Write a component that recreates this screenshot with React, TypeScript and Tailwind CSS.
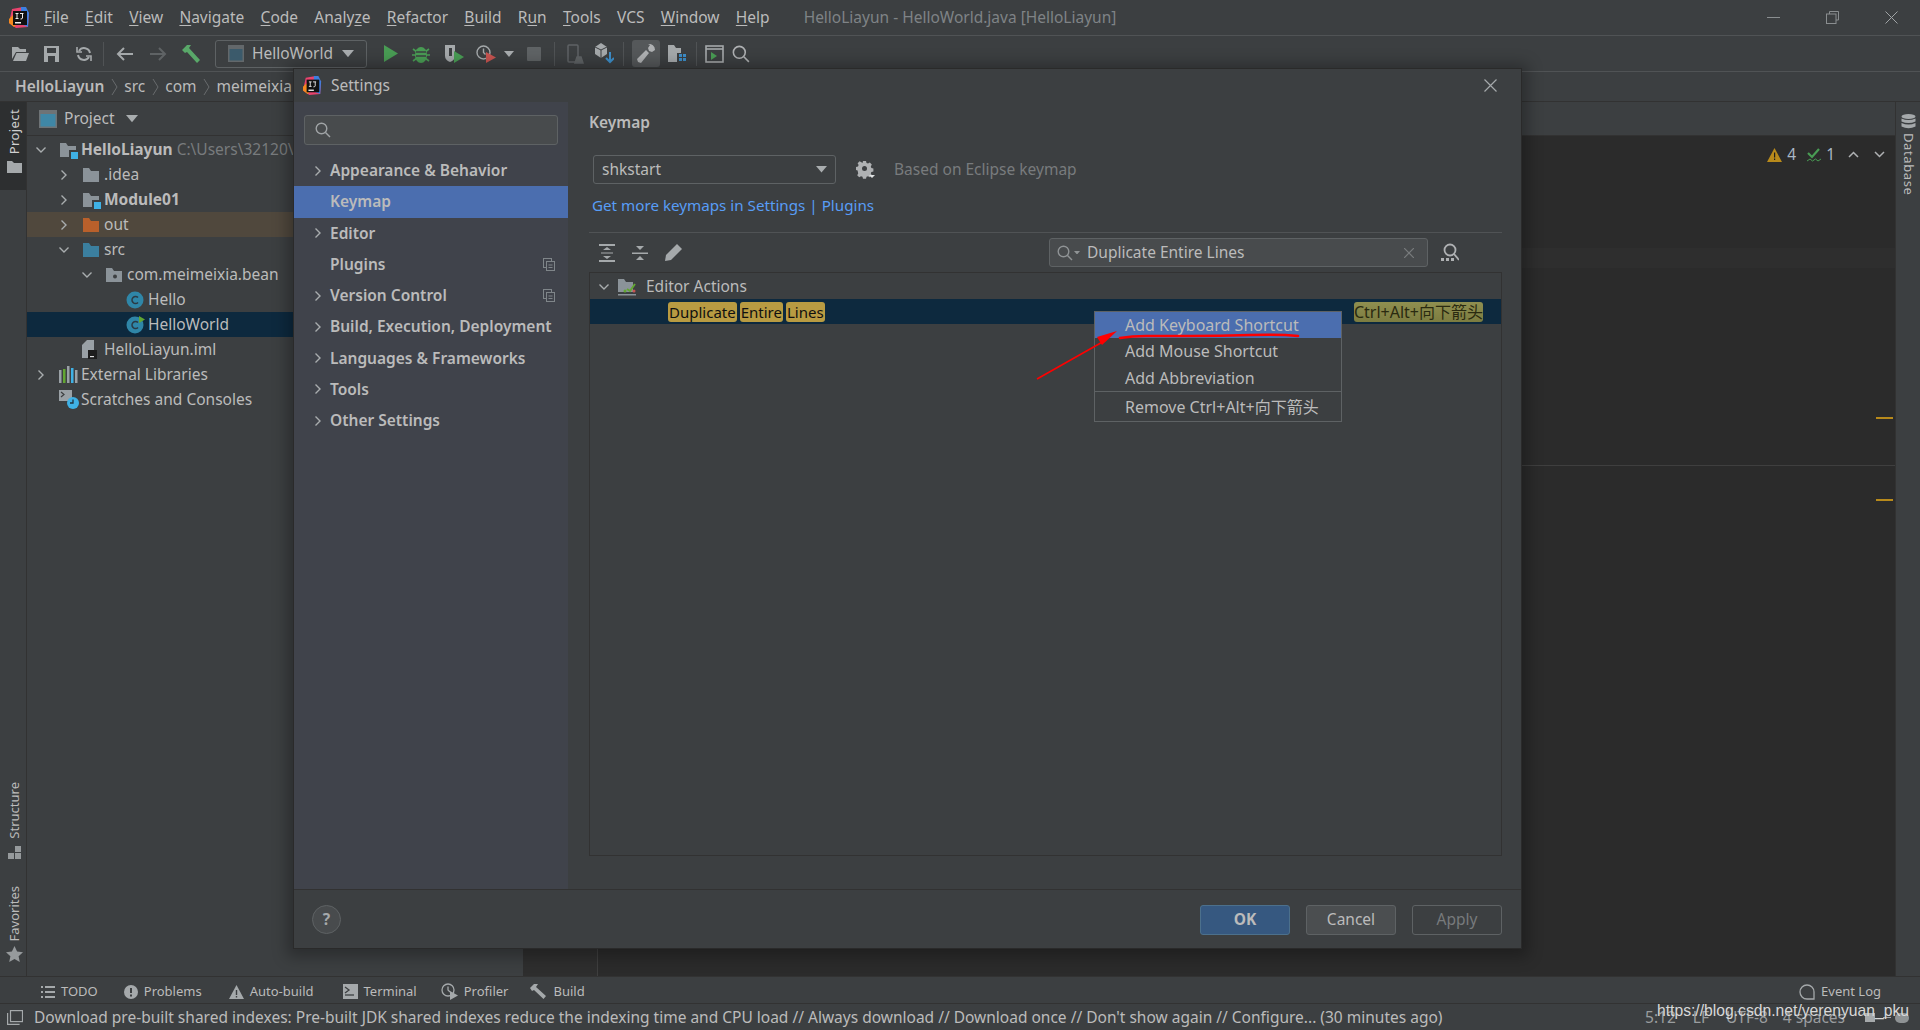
import type { ReactNode } from "react";

const ChevronRight = ({ className = "" }: { className?: string }) => (
  <svg width="8" height="12" viewBox="0 0 8 12" fill="none" stroke="#a9adaf" strokeWidth="1.4" className={className}>
    <path d="M1.5 1.5 6 6l-4.500 4.500" />
  </svg>
);

const ChevronDown = () => (
  <svg width="12" height="8" viewBox="0 0 12 8" fill="none" stroke="#a9adaf" strokeWidth="1.4">
    <path d="M1.500 1.500 6 6l4.500-4.500" />
  </svg>
);

const Caret = ({ size = 12, color = "#a9adaf" }: { size?: number; color?: string }) => (
  <svg width={size} height={size * 0.6} viewBox="0 0 10 6" fill={color}>
    <path d="M0 0h10L5 6z" />
  </svg>
);

const IdeaLogo = ({ size = 21 }: { size?: number }) => (
  <svg width={size} height={size} viewBox="0 0 21 21">
    <path d="M3 2 14 0l6 6-1 14-12 1-7-5z" fill="#e8436e" />
    <path d="M12 0h5l3 6-1 14-7-3z" fill="#3d7fe0" />
    <path d="M0 12l4-4 4 9-3 3-5-4z" fill="#f58a1f" />
    <rect x="4" y="4" width="14" height="14" fill="#111" />
    <rect x="6" y="15" width="6" height="1.500" fill="#eee" />
    <path d="M6.500 6.500h3M8 6.500v5M6.500 11.500h3M11 6.500h3.500M13.500 6.500v4.500q0 1-2 1" stroke="#eee" strokeWidth="1" fill="none" />
  </svg>
);

const Folder = ({ color = "#8b9399", badge, dot }: { color?: string; badge?: boolean; dot?: boolean }) => (
  <svg width="19" height="18" viewBox="0 0 19 18">
    <path d="M1 2h6l2 3h8v11H1z" fill={color} />
    {dot && <circle cx="10" cy="10.500" r="2" fill="#3c3f41" />}
    {badge && <rect x="10" y="9" width="9" height="9" fill="#3c3f41" />}
    {badge && <rect x="12" y="11" width="7" height="7" fill="#3fb1e5" />}
  </svg>
);

const ClassIcon = ({ run }: { run?: boolean }) => (
  <svg width="19" height="19" viewBox="0 0 19 19">
    <circle cx="9" cy="10" r="8.500" fill="#2f86a8" />
    <path d="M12 7.500a3.500 3.500 0 1 0 0 5" fill="none" stroke="#2b3a44" strokeWidth="1.600" />
    {run && <path d="M13 1l6 3.500L13 8z" fill="#62a632" />}
  </svg>
);

const ImlIcon = () => (
  <svg width="15" height="19" viewBox="0 0 15 19">
    <path d="M0 5 5 0h7v18H0z" fill="#9aa1a6" />
    <rect x="6" y="10" width="9" height="9" fill="#1d1d1d" />
    <rect x="8" y="16" width="4" height="1.200" fill="#ddd" />
  </svg>
);

const LibIcon = () => (
  <svg width="19" height="17" viewBox="0 0 19 17">
    <rect x="0" y="4" width="2.500" height="13" fill="#9aa1a6" />
    <rect x="4" y="3" width="2.500" height="14" fill="#62a632" />
    <rect x="8" y="0" width="2.500" height="17" fill="#9aa1a6" />
    <rect x="12" y="2" width="2.500" height="15" fill="#3fb1e5" />
    <rect x="16" y="4" width="2.500" height="13" fill="#9aa1a6" />
  </svg>
);

const ScratchIcon = () => (
  <svg width="20" height="19" viewBox="0 0 20 19">
    <rect x="0" y="0" width="13" height="11" fill="#9aa1a6" />
    <path d="M2 2l3 2.500L2 7" stroke="#3c3f41" strokeWidth="1.200" fill="none" />
    <circle cx="14" cy="13" r="6" fill="#3fb1e5" />
    <path d="M14 9.500V13h-3" stroke="#20323d" strokeWidth="1.300" fill="none" />
  </svg>
);

const LinkedIcon = () => (
  <svg width="12" height="13" viewBox="0 0 12 13" fill="none" stroke="#7f8589">
    <rect x="0.500" y="0.500" width="8" height="9" />
    <rect x="3.500" y="3.500" width="8" height="9" fill="#40434b" />
    <path d="M5.500 7h4M5.500 9.500h4" />
  </svg>
);

const SearchGlyph = ({ color = "#a0a4a6", size = 16 }: { color?: string; size?: number }) => (
  <svg width={size} height={size} viewBox="0 0 16 16" fill="none" stroke={color} strokeWidth="1.400">
    <circle cx="6.500" cy="6.500" r="5.300" />
    <path d="m10.500 10.500 4.500 4.500" />
  </svg>
);

const Slot = ({ ml, children }: { ml: string; children: ReactNode }) => (
  <div className={`flex items-center justify-center ${ml}`}>{children}</div>
);

const Divider = ({ ml }: { ml: string }) => <div className={`h-[24px] w-px bg-[#505355] ${ml}`} />;

const menus: [string, string, string][] = [
  ["", "F", "ile"],
  ["", "E", "dit"],
  ["", "V", "iew"],
  ["", "N", "avigate"],
  ["", "C", "ode"],
  ["Analy", "z", "e"],
  ["", "R", "efactor"],
  ["", "B", "uild"],
  ["R", "u", "n"],
  ["", "T", "ools"],
  ["VCS", "", ""],
  ["", "W", "indow"],
  ["", "H", "elp"],
];

const TitleBar = () => (
  <div className="flex h-[36px] shrink-0 items-center border-b border-[#505355] pl-[9px]">
    <IdeaLogo />
    <div className="ml-[14px] flex gap-[16.300px] text-[15.500px] text-[#bbbbbb]">
      {menus.map(([a, u, b]) => (
        <span key={a + u + b}>
          {a}
          <span className="underline underline-offset-2">{u}</span>
          {b}
        </span>
      ))}
    </div>
    <span className="ml-[34px] text-[15.500px] text-[#7f8386]">HelloLiayun - HelloWorld.java [HelloLiayun]</span>
    <div className="ml-auto flex items-center gap-[46px] pr-[22px]">
      <div className="h-px w-[13px] bg-[#8a8e90]" />
      <svg width="13" height="13" viewBox="0 0 13 13" fill="none" stroke="#8a8e90">
        <path d="M3.500 3V.5h9V9H10" />
        <rect x="0.500" y="3" width="9.500" height="9.500" />
      </svg>
      <svg width="13" height="13" viewBox="0 0 13 13" stroke="#a0a4a6">
        <path d="m.5.5 12 12m0-12-12 12" />
      </svg>
    </div>
  </div>
);

const ToolBar = () => (
  <div className="flex h-[36px] shrink-0 items-center border-b border-[#505355]">
    <Slot ml="ml-[12px]">
      <svg width="17" height="14" viewBox="0 0 17 14" fill="#a5a9ab">
        <path d="M0 0h6l2 2h6v3H4L0 12zM4.500 6H17l-3 8H1z" />
      </svg>
    </Slot>
    <Slot ml="ml-[15px]">
      <svg width="15" height="16" viewBox="0 0 15 16" fill="#a5a9ab">
        <path d="M0 0h15v16H0zM3 2v5h9V2zM4 10v6h7v-6z" fillRule="evenodd" />
      </svg>
    </Slot>
    <Slot ml="ml-[17px]">
      <svg width="16" height="16" viewBox="0 0 16 16" fill="none" stroke="#a5a9ab" strokeWidth="2">
        <path d="M14 7a6 6 0 0 0-11-2M2 9a6 6 0 0 0 11 2" />
        <path d="M1 1v5h5M15 15v-5h-5" strokeWidth="1.600" />
      </svg>
    </Slot>
    <Divider ml="ml-[11px]" />
    <Slot ml="ml-[12px]">
      <svg width="17" height="14" viewBox="0 0 17 14" fill="none" stroke="#a5a9ab" strokeWidth="2">
        <path d="M17 7H2M8 1 2 7l6 6" />
      </svg>
    </Slot>
    <Slot ml="ml-[17px]">
      <svg width="17" height="14" viewBox="0 0 17 14" fill="none" stroke="#5f6365" strokeWidth="2">
        <path d="M0 7h15M9 1l6 6-6 6" />
      </svg>
    </Slot>
    <Slot ml="ml-[14px]">
      <svg width="20" height="20" viewBox="0 0 20 20" fill="#59a869">
        <path d="M1 6 6 1l4 0-2 3 11 12-3 3L6 8 4 9z" />
      </svg>
    </Slot>
    <div className="ml-[14px] flex h-[28px] w-[152px] items-center rounded-[3px] border border-[#5e6264] pl-[12px]">
      <svg width="16" height="17" viewBox="0 0 16 17">
        <rect width="16" height="17" fill="#63686b" />
        <rect x="1.500" y="4" width="13" height="11.500" fill="#3b5a6b" />
      </svg>
      <span className="ml-[8px] text-[15.500px] text-[#bbbbbb]">HelloWorld</span>
      <div className="ml-[9px]">
        <Caret />
      </div>
    </div>
    <Slot ml="ml-[17px]">
      <svg width="14" height="17" viewBox="0 0 14 17" fill="#499c54">
        <path d="M0 0l14 8.500L0 17z" />
      </svg>
    </Slot>
    <Slot ml="ml-[14px]">
      <svg width="18" height="19" viewBox="0 0 18 19" fill="#499c54">
        <ellipse cx="9" cy="11" rx="6" ry="8" />
        <path d="M1 5l4 3M17 5l-4 3M0 11h4M18 11h-4M1 17l4-3M17 17l-4-3" stroke="#499c54" strokeWidth="1.600" />
        <path d="M4 8h10M4 12h10" stroke="#3c3f41" strokeWidth="1.300" />
      </svg>
    </Slot>
    <Slot ml="ml-[15px]">
      <svg width="19" height="19" viewBox="0 0 19 19">
        <path d="M0 1h10v11q0 4-5 6-5-2-5-6z" fill="#a5a9ab" />
        <path d="M4 4h3v8H4z" fill="#3c3f41" />
        <path d="M9 7l10 6-10 6z" fill="#499c54" />
      </svg>
    </Slot>
    <Slot ml="ml-[12px]">
      <svg width="20" height="19" viewBox="0 0 20 19" fill="none" stroke="#a5a9ab" strokeWidth="1.400">
        <circle cx="7.500" cy="8.500" r="6.500" />
        <path d="M7.500 4.500v4l2 2" />
        <path d="M10 8l10 5.500L10 19z" fill="#c75450" stroke="none" />
      </svg>
    </Slot>
    <Slot ml="ml-[8px]">
      <Caret size={10} />
    </Slot>
    <Slot ml="ml-[13px]">
      <div className="h-[14px] w-[14px] rounded-[1px] bg-[#5f6365]" />
    </Slot>
    <Divider ml="ml-[13px]" />
    <Slot ml="ml-[12px]">
      <svg width="17" height="20" viewBox="0 0 17 20" fill="none" stroke="#5f6365" strokeWidth="1.500">
        <rect x="1" y="1" width="10" height="17" rx="1" />
        <path d="M8 19l2-6h4l2 6z" fill="#5f6365" />
      </svg>
    </Slot>
    <Slot ml="ml-[11px]">
      <svg width="19" height="21" viewBox="0 0 19 21">
        <path d="M0 4l6-4 6 4v7l-6 4-6-4z" fill="#a5a9ab" />
        <path d="M6 7v8M0 4l6 3 6-3" stroke="#3c3f41" fill="none" />
        <path d="M15 9v10M11 15l4 4 4-4" stroke="#3d8ec9" strokeWidth="2" fill="none" />
      </svg>
    </Slot>
    <Divider ml="ml-[9px]" />
    <div className="ml-[8px] flex h-[27px] w-[28px] items-center justify-center rounded-[3px] bg-[#55585a]">
      <svg width="18" height="20" viewBox="0 0 18 20" fill="#afb1b3">
        <path d="M11 0a6 6 0 0 1 7 6l-3 2-3-1-1-3 2-3zM9 6l3 3-8 10-3-1-1-3z" />
      </svg>
    </div>
    <Slot ml="ml-[8px]">
      <svg width="19" height="19" viewBox="0 0 19 19">
        <path d="M0 1h6l2 3h5v14H0z" fill="#a5a9ab" />
        <rect x="9" y="9" width="10" height="10" fill="#3c3f41" />
        <path d="M11 10h3v3h-3zM15 10h3v3h-3zM11 14h3v3h-3zM15 14h3v3h-3z" fill="#3d8ec9" />
      </svg>
    </Slot>
    <Divider ml="ml-[9px]" />
    <Slot ml="ml-[8px]">
      <svg width="19" height="18" viewBox="0 0 19 18" fill="none">
        <rect x="1" y="1" width="17" height="16" stroke="#a5a9ab" strokeWidth="1.600" />
        <path d="M1 4h17" stroke="#a5a9ab" strokeWidth="1.600" />
        <path d="M6 7l6 4-6 4z" fill="#499c54" />
      </svg>
    </Slot>
    <Slot ml="ml-[8px]">
      <SearchGlyph color="#afb1b3" size={18} />
    </Slot>
  </div>
);

const NavBar = () => (
  <div className="flex h-[30px] shrink-0 items-center border-b border-[#323232] pl-[15px] text-[15.500px] text-[#bbbbbb]">
    <span className="font-semibold">HelloLiayun</span>
    {["src", "com", "meimeixia"].map((part) => (
      <span key={part} className="flex items-center">
        <svg width="7" height="18" viewBox="0 0 7 18" fill="none" stroke="#686b6d" className="mx-[6.500px]">
          <path d="m1 1 5 8-5 8" />
        </svg>
        {part}
      </span>
    ))}
  </div>
);

interface TreeRow {
  label: string;
  pad: string;
  chevron?: "right" | "down";
  icon: ReactNode;
  bold?: boolean;
  hint?: string;
  bg?: string;
}

const treeRows: TreeRow[] = [
  { label: "HelloLiayun", pad: "pl-[2px]", chevron: "down", icon: <Folder badge />, bold: true, hint: "C:\\Users\\32120\\IdeaProjects" },
  { label: ".idea", pad: "pl-[25px]", chevron: "right", icon: <Folder /> },
  { label: "Module01", pad: "pl-[25px]", chevron: "right", icon: <Folder badge />, bold: true },
  { label: "out", pad: "pl-[25px]", chevron: "right", icon: <Folder color="#b9602b" />, bg: "bg-[#50483d]" },
  { label: "src", pad: "pl-[25px]", chevron: "down", icon: <Folder color="#3b7f9f" /> },
  { label: "com.meimeixia.bean", pad: "pl-[48px]", chevron: "down", icon: <Folder dot /> },
  { label: "Hello", pad: "pl-[69px]", icon: <ClassIcon /> },
  { label: "HelloWorld", pad: "pl-[69px]", icon: <ClassIcon run />, bg: "bg-[#0d293e]" },
  { label: "HelloLiayun.iml", pad: "pl-[25px]", icon: <ImlIcon /> },
  { label: "External Libraries", pad: "pl-[2px]", chevron: "right", icon: <LibIcon /> },
  { label: "Scratches and Consoles", pad: "pl-[2px]", icon: <ScratchIcon /> },
];

const ProjectPanel = () => (
  <div className="w-[496px] shrink-0 overflow-hidden">
    <div className="flex h-[34px] items-center border-b border-[#323232] pl-[12px] pt-[1px]">
      <svg width="18" height="18" viewBox="0 0 18 18">
        <rect width="18" height="18" fill="#6e7376" />
        <rect x="1.500" y="4" width="15" height="12.500" fill="#3f87a6" />
      </svg>
      <span className="ml-[7px] text-[15.500px] text-[#bbbbbb]">Project</span>
      <div className="ml-[11px]">
        <Caret />
      </div>
    </div>
    <div className="pt-[1px]">
      {treeRows.map((row) => (
        <div key={row.label} className={`flex h-[25px] items-center whitespace-nowrap text-[15.500px] text-[#bbbbbb] ${row.pad} ${row.bg ?? ""}`}>
          <div className="flex w-[24px] items-center justify-center">
            {row.chevron === "right" && <ChevronRight />}
            {row.chevron === "down" && <ChevronDown />}
          </div>
          <div className="ml-[6px] flex w-[20px] items-center">{row.icon}</div>
          <span className={`ml-[2px] ${row.bold ? "font-bold" : ""}`}>{row.label}</span>
          {row.hint && <span className="ml-[4px] text-[#787b7d]">{row.hint}</span>}
        </div>
      ))}
    </div>
  </div>
);

const LeftStrip = () => (
  <div className="flex w-[27px] shrink-0 flex-col border-r border-[#323232]">
    <div className="flex h-[88px] flex-col items-center bg-[#2d2f30] pl-[3px] pt-[7px]">
      <span className="rotate-180 text-[13px] tracking-[0.4px] text-[#d0d0d0] [writing-mode:vertical-rl]">Project</span>
      <svg width="15" height="12" viewBox="0 0 15 12" fill="#a5a9ab" className="mt-[7px]">
        <path d="M0 0h5l2 2h8v10H0z" />
      </svg>
    </div>
    <div className="mt-auto flex flex-col items-center pb-[14px] pl-[3px]">
      <span className="rotate-180 text-[13px] text-[#bbbbbb] [writing-mode:vertical-rl]">Structure</span>
      <svg width="13" height="13" viewBox="0 0 13 13" fill="#969a9c" className="mt-[7px]">
        <path d="M7 0h6v6H7zM0 7h6v6H0zM7 7h6v6H7z" />
      </svg>
      <span className="mt-[27px] rotate-180 text-[13px] text-[#bbbbbb] [writing-mode:vertical-rl]">Favorites</span>
      <svg width="17" height="16" viewBox="0 0 17 16" fill="#969a9c" className="mt-[5px]">
        <path d="m8.500 0 2.600 5.500 5.900.7-4.400 4 1.200 5.800-5.300-3-5.300 3 1.200-5.800L0 6.200l5.900-.7z" />
      </svg>
    </div>
  </div>
);

const RightStrip = () => (
  <div className="flex w-[25px] shrink-0 flex-col items-center border-l border-[#323232] pt-[12px]">
    <svg width="15" height="16" viewBox="0 0 15 16" fill="#a5a9ab">
      <ellipse cx="7.500" cy="2.500" rx="7" ry="2.500" />
      <path d="M.5 4.500q7 3 14 0v3q-7 3-14 0zM.5 9q7 3 14 0v3.500q-7 3.500-14 0z" />
    </svg>
    <span className="mt-[3px] text-[13px] tracking-[0.6px] text-[#bbbbbb] [writing-mode:vertical-rl]">Database</span>
  </div>
);

const EditorArea = () => (
  <div className="relative flex min-w-0 flex-1 flex-col">
    <div className="h-[34px] shrink-0 border-b border-[#323232]" />
    <div className="relative flex flex-1 bg-[#2b2b2b]">
      <div className="w-[75px] shrink-0 border-r border-[#3f3f3f] bg-[#2e2e2e]" />
      <div className="flex-1">
        <div className="ml-auto flex h-[37px] items-center justify-end pr-[10px] text-[15.500px] text-[#a9b7c6]">
          <svg width="15" height="14" viewBox="0 0 15 14">
            <path d="M7.500 0 15 14H0z" fill="#b88a1b" />
            <path d="M7 4.500h1.200v5H7zM7 10.500h1.200V12H7z" fill="#1d1d1d" />
          </svg>
          <span className="ml-[5px]">4</span>
          <svg width="14" height="14" viewBox="0 0 14 14" fill="none" stroke="#499c54" className="ml-[11px]">
            <path d="m1 5 4 4 7-8" strokeWidth="2.200" />
            <path d="M0 13l3-2 2.500 2 3-2 2.500 2 3-2" />
          </svg>
          <span className="ml-[5px]">1</span>
          <svg width="11" height="7" viewBox="0 0 11 7" fill="none" stroke="#afb1b3" strokeWidth="1.500" className="ml-[13px]">
            <path d="m1 6 4.500-4.500L10 6" />
          </svg>
          <svg width="11" height="7" viewBox="0 0 11 7" fill="none" stroke="#afb1b3" strokeWidth="1.500" className="ml-[15px]">
            <path d="m1 1 4.500 4.500L10 1" />
          </svg>
        </div>
        <div className="mt-[75px] h-[20px] bg-[#2e2e2e]" />
        <div className="mt-[197px] h-px bg-[#3f3f3f]" />
      </div>
      <div className="absolute right-[2px] top-[281px] h-[2px] w-[17px] bg-[#b88a1b]" />
      <div className="absolute right-[2px] top-[363px] h-[2px] w-[17px] bg-[#b88a1b]" />
    </div>
  </div>
);

const ToolTab = ({ ml, icon, label }: { ml: string; icon: ReactNode; label: string }) => (
  <div className={`flex items-center gap-[6px] text-[13px] text-[#bbbbbb] ${ml}`}>
    {icon}
    <span>{label}</span>
  </div>
);

const ToolWindowBar = () => (
  <div className="flex h-[28px] shrink-0 items-center border-y border-[#323232] pl-[41px] pt-[3px]">
    <ToolTab
      ml=""
      label="TODO"
      icon={
        <svg width="14" height="12" viewBox="0 0 14 12" fill="#a5a9ab">
          <path d="M0 0h2v2H0zM4 0h10v2H4zM0 5h2v2H0zM4 5h10v2H4zM0 10h2v2H0zM4 10h10v2H4z" />
        </svg>
      }
    />
    <ToolTab
      ml="ml-[26px]"
      label="Problems"
      icon={
        <svg width="14" height="14" viewBox="0 0 14 14">
          <circle cx="7" cy="7" r="7" fill="#a5a9ab" />
          <path d="M6 3h2v5H6zM6 9.500h2v2H6z" fill="#3c3f41" />
        </svg>
      }
    />
    <ToolTab
      ml="ml-[27px]"
      label="Auto-build"
      icon={
        <svg width="15" height="14" viewBox="0 0 15 14">
          <path d="M7.500 0 15 14H0z" fill="#a5a9ab" />
          <path d="M6.800 5h1.400v5H6.800zM6.800 11h1.400v1.500H6.800z" fill="#3c3f41" />
        </svg>
      }
    />
    <ToolTab
      ml="ml-[29px]"
      label="Terminal"
      icon={
        <svg width="15" height="15" viewBox="0 0 15 15">
          <rect width="15" height="15" fill="#a5a9ab" />
          <path d="m2 3 4 3-4 3" stroke="#3c3f41" strokeWidth="1.300" fill="none" />
          <path d="M2 11h9" stroke="#3c3f41" strokeWidth="1.300" />
        </svg>
      }
    />
    <ToolTab
      ml="ml-[24px]"
      label="Profiler"
      icon={
        <svg width="17" height="17" viewBox="0 0 17 17" fill="none" stroke="#a5a9ab" strokeWidth="1.300">
          <circle cx="7" cy="7" r="6" />
          <path d="M7 3.500V7l2 2" />
          <path d="M9 8l8 4.500L9 17z" fill="#a5a9ab" stroke="none" />
        </svg>
      }
    />
    <ToolTab
      ml="ml-[22px]"
      label="Build"
      icon={
        <svg width="17" height="15" viewBox="0 0 17 15" fill="#a5a9ab">
          <path d="M0 4 4 0h4L6 3l10 9-2.500 3L4 6 2 7z" />
        </svg>
      }
    />
    <div className="ml-auto flex items-center gap-[6px] pr-[39px] text-[13px] text-[#bbbbbb]">
      <svg width="16" height="16" viewBox="0 0 16 16" fill="none" stroke="#a5a9ab" strokeWidth="1.300">
        <path d="M15 15H8a7 7 0 1 1 7-7z" />
      </svg>
      <span>Event Log</span>
    </div>
  </div>
);

const StatusBar = () => (
  <div className="flex h-[26px] shrink-0 items-center pl-[7px] pt-[1px] text-[15.500px] text-[#bbbbbb]">
    <svg width="16" height="15" viewBox="0 0 16 15" fill="none" stroke="#a5a9ab" strokeWidth="1.200">
      <rect x="3.500" y="0.600" width="12" height="11" />
      <path d="M.6 3v11.400h12" />
    </svg>
    <span className="ml-[11px] whitespace-nowrap">
      Download pre-built shared indexes: Pre-built JDK shared indexes reduce the indexing time and CPU load // Always download // Download once // Don&apos;t show again // Configure... (30 minutes ago)
    </span>
    <div className="ml-auto flex items-center pr-[11px] text-[#9a9d9f]">
      <span>5:12</span>
      <span className="ml-[17px]">LF</span>
      <span className="ml-[17px]">UTF-8</span>
      <span className="ml-[15px]">4 spaces</span>
      <div className="ml-[20px] h-[9px] w-[10px] bg-[#a5a9ab]" />
      <div className="ml-[8px] h-px w-[8px] bg-[#a5a9ab]" />
      <div className="ml-[4px] h-[10px] w-[14px] rounded-full bg-[#8f9395]" />
    </div>
  </div>
);

const settingsNav: { label: string; chevron?: boolean; linked?: boolean; active?: boolean }[] = [
  { label: "Appearance & Behavior", chevron: true },
  { label: "Keymap", active: true },
  { label: "Editor", chevron: true },
  { label: "Plugins", linked: true },
  { label: "Version Control", chevron: true, linked: true },
  { label: "Build, Execution, Deployment", chevron: true },
  { label: "Languages & Frameworks", chevron: true },
  { label: "Tools", chevron: true },
  { label: "Other Settings", chevron: true },
];

const SettingsSidebar = () => (
  <div className="w-[274px] shrink-0 bg-[#40434b] pt-[13px]">
    <div className="mx-[10px] flex h-[30px] w-[254px] items-center rounded-[3px] border border-[#5e6264] bg-[#484b4d] pl-[10px]">
      <SearchGlyph />
    </div>
    <div className="mt-[10px]">
      {settingsNav.map((item) => (
        <div
          key={item.label}
          className={`flex h-[31.250px] items-center text-[15.500px] font-semibold text-[#bbbbbb] ${item.active ? "bg-[#4b6eaf]" : ""}`}
        >
          <div className="ml-[20px] w-[16px]">{item.chevron && <ChevronRight />}</div>
          <span>{item.label}</span>
          {item.linked && (
            <div className="ml-auto mr-[13px]">
              <LinkedIcon />
            </div>
          )}
        </div>
      ))}
    </div>
  </div>
);

const Highlight = ({ children }: { children: ReactNode }) => (
  <span className="rounded-[3px] bg-[#b89b42] px-[1px] text-[15px] leading-[20px] text-[#101010]">{children}</span>
);

const KeymapPane = () => (
  <div className="min-w-0 flex-1 pl-[21px] pr-[19px] pt-[9px]">
    <div className="text-[15.500px] font-semibold leading-[22px] text-[#bbbbbb]">Keymap</div>
    <div className="mt-[22px] flex items-center pl-[4px]">
      <div className="flex h-[29px] w-[243px] items-center justify-between rounded-[3px] border border-[#5e6264] px-[8px] text-[15.500px] text-[#bbbbbb]">
        <span>shkstart</span>
        <Caret size={11} />
      </div>
      <svg width="19" height="19" viewBox="0 0 19 19" className="ml-[20px]">
        <path
          d="M7 1h3l.5 2 1.500.6 1.800-1 2 2-1 1.800.6 1.500 2 .5v3l-2 .5-.6 1.500 1 1.800-2 2-1.800-1-1.500.6-.5 2H7l-.5-2-1.500-.6-1.800 1-2-2 1-1.800L1.600 10.400l-1.600-.4v-3l2-.5.6-1.500-1-1.800 2-2 1.800 1L6.500 3z"
          fill="#afb1b3"
        />
        <circle cx="8.500" cy="8.500" r="2.500" fill="#3c3f41" />
        <path d="M13 15h6l-3 3z" fill="#dfe1e2" />
      </svg>
      <span className="ml-[19px] text-[15.500px] text-[#787b7d]">Based on Eclipse keymap</span>
    </div>
    <div className="mt-[10px] pl-[3px] text-[15.200px] leading-[22px] text-[#589df6]">Get more keymaps in Settings | Plugins</div>
    <div className="mt-[16px] flex h-[40px] items-center border-t border-[#505355] pl-[10px]">
      <svg width="16" height="18" viewBox="0 0 16 18" fill="#a5a9ab">
        <path d="M0 0h16v2H0zM0 16h16v2H0zM4 6l4-3 4 3zM4 12h8l-4 3zM2 8.500h12v1H2z" />
      </svg>
      <svg width="16" height="16" viewBox="0 0 16 16" fill="#a5a9ab" className="ml-[17px]">
        <path d="M0 7.500h16v1.500H0zM4 1h8L8 5zM8 11l4 4H4z" />
      </svg>
      <svg width="17" height="17" viewBox="0 0 17 17" fill="#a5a9ab" className="ml-[17px]">
        <path d="M12 0l5 5L6 16l-6 1 1-6z" />
      </svg>
      <div className="ml-[367px] flex h-[29px] w-[379px] items-center rounded-[3px] border border-[#5e6264] bg-[#484b4d] pl-[7px] text-[15.500px] text-[#bbbbbb]">
        <SearchGlyph color="#8f9395" />
        <div className="ml-[1px]">
          <Caret size={6} color="#8f9395" />
        </div>
        <span className="ml-[7px]">Duplicate Entire Lines</span>
        <svg width="10" height="10" viewBox="0 0 10 10" stroke="#787b7d" strokeWidth="1.200" className="ml-auto mr-[13px]">
          <path d="m0 0 10 10m0-10L0 10" />
        </svg>
      </div>
      <svg width="19" height="19" viewBox="0 0 19 19" fill="none" className="ml-[12px]">
        <circle cx="10" cy="7" r="5.500" stroke="#afb1b3" strokeWidth="1.800" />
        <path d="m14 11 5 6" stroke="#afb1b3" strokeWidth="1.800" />
        <path d="M1 15h3v3H1zM6 15h3v3H6zM11 15h3v3h-3z" fill="#afb1b3" />
      </svg>
    </div>
    <div className="h-[584px] border border-[#323232]">
      <div className="flex h-[26px] items-center pl-[8px] pt-[1px] text-[15.500px] text-[#bbbbbb]">
        <ChevronDown />
        <svg width="19" height="18" viewBox="0 0 19 18" className="ml-[8px]">
          <path d="M0 1h6l2 3h7v10H0z" fill="#8b9399" />
          <path d="M0 16h18v1.500H0z" fill="#8b9399" />
          <path d="m9 11 3 2 5-7" stroke="#62a632" strokeWidth="2" fill="none" />
          <circle cx="7" cy="13" r="1.500" fill="#62a632" />
          <circle cx="16" cy="13" r="1.500" fill="#c75450" />
        </svg>
        <span className="ml-[9px]">Editor Actions</span>
      </div>
      <div className="flex h-[25px] items-center justify-between bg-[#0d293e] pl-[78px] pr-[18px]">
        <div className="flex gap-[3px]">
          <Highlight>Duplicate</Highlight>
          <Highlight>Entire</Highlight>
          <Highlight>Lines</Highlight>
        </div>
        <span className="rounded-[3px] bg-[linear-gradient(#8f8f50,#7c7c40)] text-[16px] leading-[20px] text-[#2a2a10]">
          Ctrl+Alt+向下箭头
        </span>
      </div>
    </div>
  </div>
);

const KeymapPopup = () => (
  <div className="absolute left-[1094px] top-[311px] w-[248px] border border-[#5e6264] bg-[#3c3f41] text-[16px] text-[#bbbbbb]">
    <div className="flex h-[26px] items-center bg-[#4b6eaf] pl-[30px]">Add Keyboard Shortcut</div>
    <div className="flex h-[26px] items-center pl-[30px]">Add Mouse Shortcut</div>
    <div className="flex h-[27px] items-center pl-[30px]">Add Abbreviation</div>
    <div className="flex h-[30px] items-center border-t border-[#5e6264] pl-[30px] pt-[1px]">Remove Ctrl+Alt+向下箭头</div>
  </div>
);

const RedAnnotation = () => (
  <svg width="300" height="60" viewBox="0 0 300 60" fill="none" className="absolute left-[1030px] top-[325px]">
    <path d="M7 54 76 15" stroke="#ff0000" strokeWidth="1.600" />
    <path d="M87 6 67 12l5 8z" fill="#ff0000" />
    <path d="M90 13q12-2 26-2t44 0 60-1 48 1" stroke="#ff0000" strokeWidth="2.500" strokeLinecap="round" />
  </svg>
);

const SettingsDialog = () => (
  <div className="absolute left-[293px] top-[68px] flex h-[881px] w-[1229px] flex-col border border-[#2a2a2a] bg-[#3c3f41] shadow-[0_2px_14px_6px_rgba(0,0,0,0.28)]">
    <div className="flex h-[33px] shrink-0 items-center pl-[9px] pr-[24px]">
      <IdeaLogo size={19} />
      <span className="ml-[9px] text-[15.500px] text-[#bbbbbb]">Settings</span>
      <svg width="13" height="13" viewBox="0 0 13 13" stroke="#a5a9ab" strokeWidth="1.200" className="ml-auto">
        <path d="m.5.5 12 12m0-12-12 12" />
      </svg>
    </div>
    <div className="flex h-[788px] shrink-0 border-b border-[#323232]">
      <SettingsSidebar />
      <KeymapPane />
    </div>
    <div className="flex flex-1 items-center pl-[18px] pr-[19px] pt-[1px] text-[15.500px]">
      <div className="flex h-[29px] w-[29px] items-center justify-center rounded-full border border-[#5e6264] bg-[#484b4d] font-bold text-[#a5a9ab]">?</div>
      <div className="ml-auto flex gap-[16px]">
        <button className="h-[30px] w-[90px] rounded-[3px] border border-[#4c708c] bg-[#365880] font-bold text-[#bbbbbb]">OK</button>
        <button className="h-[30px] w-[90px] rounded-[3px] border border-[#5e6264] bg-[#4b4e50] text-[#bbbbbb]">Cancel</button>
        <button className="h-[30px] w-[90px] rounded-[3px] border border-[#5e6264] text-[#777a7c]">Apply</button>
      </div>
    </div>
  </div>
);

export default function App() {
  return (
    <div className="relative flex h-[1030px] w-[1920px] flex-col overflow-hidden bg-[#3c3f41] font-['Noto_Sans','Noto_Sans_CJK_SC',sans-serif]">
      <TitleBar />
      <ToolBar />
      <NavBar />
      <div className="flex min-h-0 flex-1">
        <LeftStrip />
        <ProjectPanel />
        <EditorArea />
        <RightStrip />
      </div>
      <ToolWindowBar />
      <StatusBar />
      <SettingsDialog />
      <KeymapPopup />
      <RedAnnotation />
      <span className="absolute left-[1657px] top-[999px] font-['Liberation_Sans',sans-serif] text-[15.700px] text-[#d8d8d8]">https://blog.csdn.net/yerenyuan_pku</span>
    </div>
  );
}
